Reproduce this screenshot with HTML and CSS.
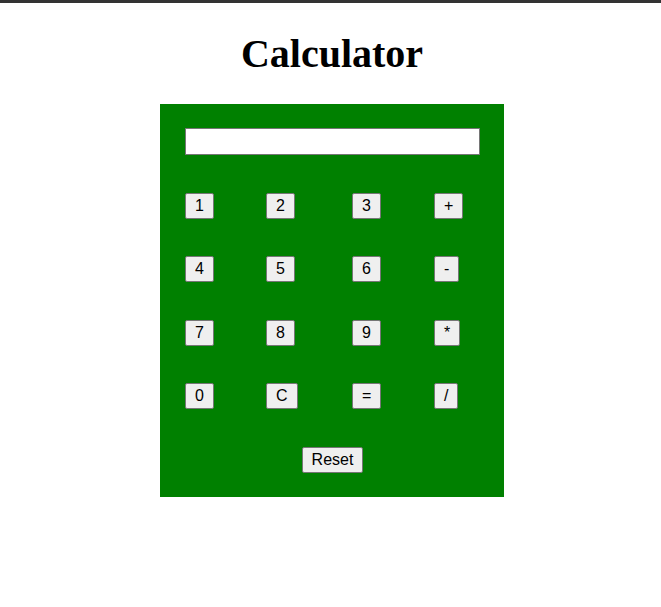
FILE: index.html
```html
<!DOCTYPE html>
<html>
<head>
<meta charset="utf-8">
<title>Calculator</title>
<link rel="stylesheet" href="styles.css">
</head>
<body>
<div class="topbar"></div>
<main class="page">
  <h1 class="title">Calculator</h1>
  <form class="calc">
    <input class="display" type="text">
    <button type="button" class="key">1</button>
    <button type="button" class="key">2</button>
    <button type="button" class="key">3</button>
    <button type="button" class="key">+</button>
    <button type="button" class="key">4</button>
    <button type="button" class="key">5</button>
    <button type="button" class="key">6</button>
    <button type="button" class="key">-</button>
    <button type="button" class="key">7</button>
    <button type="button" class="key">8</button>
    <button type="button" class="key">9</button>
    <button type="button" class="key">*</button>
    <button type="button" class="key">0</button>
    <button type="button" class="key">C</button>
    <button type="button" class="key">=</button>
    <button type="button" class="key">/</button>
    <button type="reset" class="key reset">Reset</button>
  </form>
</main>
</body>
</html>
```
FILE: styles.css
```css
html, body {
  margin: 0;
  padding: 0;
  background: #ffffff;
}
.topbar {
  height: 3px;
  background: #333333;
}
.page {
  margin-left: 3px;
  display: flex;
  flex-direction: column;
  align-items: center;
}
.title {
  font-family: "Liberation Serif", "Times New Roman", serif;
  font-weight: bold;
  font-size: 40px;
  line-height: 46px;
  margin: 27.5px 0 27px 0;
  color: #000;
}
.calc {
  background: #008000;
  margin: 0;
  padding: 24px 24px 24px 25px;
  display: grid;
  grid-template-columns: 81px 86px 82px 46px;
  row-gap: 37.5px;
  align-items: start;
}
.display {
  grid-column: 1 / -1;
  box-sizing: border-box;
  width: 295px;
  height: 27px;
  margin: 0 0 0.5px 0;
  border: 1px solid #767676;
  background: #fff;
  padding: 0 4px;
  font-family: "Liberation Sans", Arial, sans-serif;
  font-size: 16px;
}
.key {
  justify-self: start;
  box-sizing: border-box;
  height: 26px;
  padding: 0 9px;
  margin: 0;
  border: 1px solid #767676;
  border-radius: 2px;
  background: #efefef;
  color: #000;
  font-family: "Liberation Sans", Arial, sans-serif;
  font-size: 16px;
  line-height: 18px;
}
.reset {
  grid-column: 1 / -1;
  justify-self: center;
}
```
